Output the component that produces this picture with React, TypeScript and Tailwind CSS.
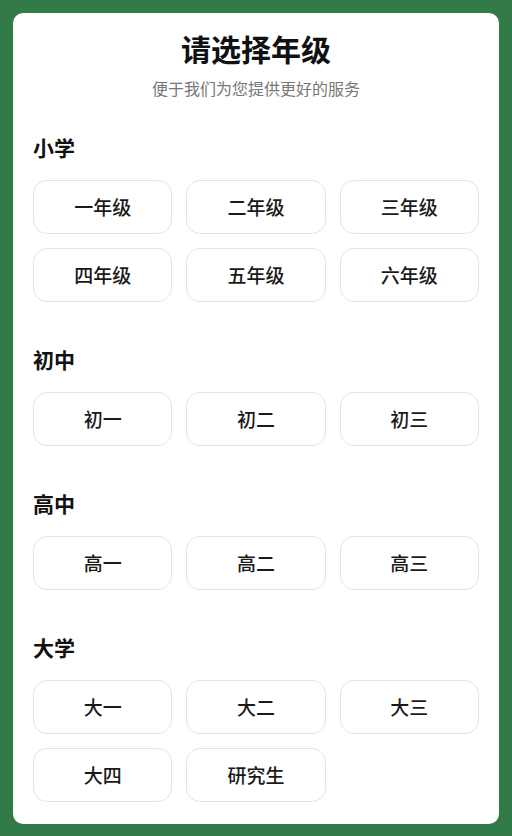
import * as React from "react"

const sections: { title: string; items: string[] }[] = [
  { title: "小学", items: ["一年级", "二年级", "三年级", "四年级", "五年级", "六年级"] },
  { title: "初中", items: ["初一", "初二", "初三"] },
  { title: "高中", items: ["高一", "高二", "高三"] },
  { title: "大学", items: ["大一", "大二", "大三", "大四", "研究生"] },
]

export default function App() {
  const [selected, setSelected] = React.useState<string | null>(null)

  return (
    <div
      className="min-h-[836px] w-full bg-[#327a48] px-[13px] py-[13px]"
      style={{ fontFamily: '"Noto Sans CJK SC", "Noto Sans", sans-serif' }}
    >
      <div className="rounded-[10px] bg-white px-5 pt-[17px] pb-[22px]">
        <h1 className="text-center text-[30px] leading-[36px] font-bold text-[#111]">请选择年级</h1>
        <p className="mt-[11px] text-center text-[16px] leading-[22px] text-[#777]">
          便于我们为您提供更好的服务
        </p>

        <div className="mt-[34px] flex flex-col gap-[43px]">
          {sections.map((section) => (
            <div key={section.title}>
              <h2 className="text-[21px] leading-[28px] font-bold text-[#111]">{section.title}</h2>
              <div className="mt-[19px] grid grid-cols-3 gap-[14px]">
                {section.items.map((item) => (
                  <button
                    key={item}
                    type="button"
                    onClick={() => setSelected(item)}
                    className={`h-[54px] rounded-[14px] border text-[19px] font-medium text-[#1a1a1a] ${
                      selected === item ? "border-[#327a48] bg-[#eef6f0]" : "border-[#e3e3e3] bg-white"
                    }`}
                  >
                    {item}
                  </button>
                ))}
              </div>
            </div>
          ))}
        </div>
      </div>
    </div>
  )
}
